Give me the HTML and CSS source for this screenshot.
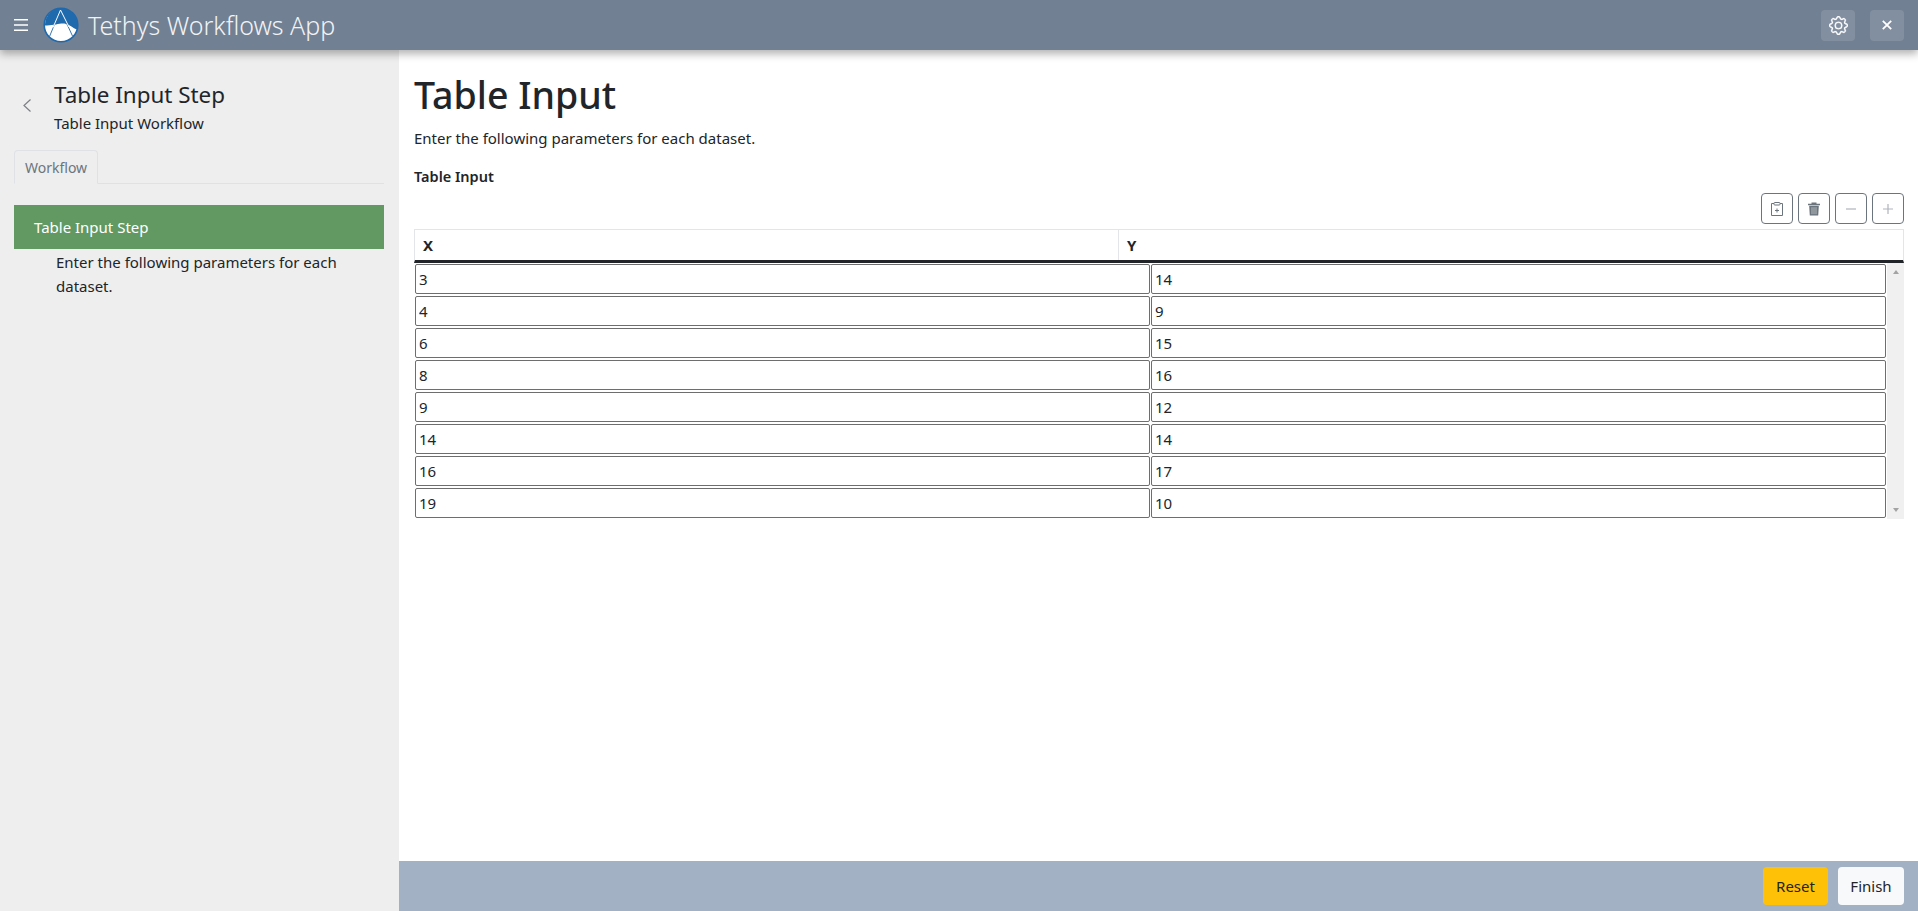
FILE: index.html
```html
<!DOCTYPE html>
<html lang="en">
<head>
  <meta charset="UTF-8" />
  <title>Tethys Workflows App</title>
  <link rel="stylesheet" href="styles.css">
</head>
<body>
  <header class="app-header">
    <button class="menu-toggle" aria-label="Menu">
      <svg width="14" height="14" viewBox="0 0 14 14"><path d="M0 1.700h14M0 7h14M0 12.300h14" stroke="#fff" stroke-width="1.600" fill="none"/></svg>
    </button>
    <svg class="logo" width="36" height="36" viewBox="0 0 36 36">
      <circle cx="18" cy="18" r="16.800" fill="#fff" stroke="#1f69ad" stroke-width="1.600"/>
      <path d="M2 18.500C12 19 17 15.500 23 17C27 18 30 21 33.800 22.500A16.300 16.300 0 1 0 2 18.500Z" fill="#1f69ad"/>
      <path d="M17.500 3L6.500 29.500M17.500 3L29.500 29" stroke="#1f69ad" stroke-width=".9" fill="none"/>
      <path d="M17.500 3L10 20.500M17.500 3L26 20" stroke="#fff" stroke-width="1" fill="none"/>
    </svg>
    <span class="app-title">Tethys Workflows App</span>
    <div class="header-actions">
      <button class="header-btn" aria-label="Settings">
        <svg width="19" height="19" viewBox="0 0 16 16" fill="#fff" stroke="#fff" stroke-width=".25"><path d="M8 4.754a3.246 3.246 0 1 0 0 6.492 3.246 3.246 0 0 0 0-6.492zM5.754 8a2.246 2.246 0 1 1 4.492 0 2.246 2.246 0 0 1-4.492 0z"/><path d="M9.796 1.343c-.527-1.790-3.065-1.790-3.592 0l-.094.319a.873.873 0 0 1-1.255.52l-.292-.16c-1.640-.892-3.433.902-2.540 2.541l.159.292a.873.873 0 0 1-.52 1.255l-.319.094c-1.790.527-1.790 3.065 0 3.592l.319.094a.873.873 0 0 1 .52 1.255l-.16.292c-.892 1.640.901 3.434 2.541 2.540l.292-.159a.873.873 0 0 1 1.255.52l.094.319c.527 1.790 3.065 1.790 3.592 0l.094-.319a.873.873 0 0 1 1.255-.52l.292.16c1.640.893 3.434-.902 2.540-2.541l-.159-.292a.873.873 0 0 1 .52-1.255l.319-.094c1.790-.527 1.790-3.065 0-3.592l-.319-.094a.873.873 0 0 1-.52-1.255l.16-.292c.893-1.640-.902-3.433-2.541-2.540l-.292.159a.873.873 0 0 1-1.255-.52l-.094-.319zm-2.633.283c.246-.835 1.428-.835 1.674 0l.094.319a1.873 1.873 0 0 0 2.693 1.115l.291-.16c.764-.415 1.600.42 1.184 1.185l-.159.292a1.873 1.873 0 0 0 1.116 2.692l.318.094c.835.246.835 1.428 0 1.674l-.319.094a1.873 1.873 0 0 0-1.115 2.693l.16.291c.415.764-.42 1.600-1.185 1.184l-.291-.159a1.873 1.873 0 0 0-2.693 1.116l-.094.318c-.246.835-1.428.835-1.674 0l-.094-.319a1.873 1.873 0 0 0-2.692-1.115l-.292.16c-.764.415-1.600-.42-1.184-1.185l.159-.291A1.873 1.873 0 0 0 1.945 8.930l-.319-.094c-.835-.246-.835-1.428 0-1.674l.319-.094A1.873 1.873 0 0 0 3.060 4.377l-.16-.292c-.415-.764.42-1.600 1.185-1.184l.292.159a1.873 1.873 0 0 0 2.692-1.115l.094-.319z"/></svg>
      </button>
      <button class="header-btn" aria-label="Close">
        <svg width="10" height="10" viewBox="0 0 10 10"><path d="M.8.8l8.400 8.400M9.200.8L.8 9.200" stroke="#fff" stroke-width="1.800" fill="none"/></svg>
      </button>
    </div>
  </header>

  <div class="app-body">
    <aside class="sidebar">
      <div class="sidebar-head">
        <svg class="back-icon" width="8" height="13" viewBox="0 0 8 13"><path d="M7.500.5L1 6.500l6.500 6" stroke="#7c7f83" stroke-width="1.200" fill="none"/></svg>
        <div>
          <div class="step-title">Table Input Step</div>
          <div class="step-workflow">Table Input Workflow</div>
        </div>
      </div>
      <div class="tabs"><span class="tab">Workflow</span></div>
      <div class="step-active">Table Input Step</div>
      <p class="step-help">Enter the following parameters for each dataset.</p>
    </aside>

    <main class="content">
      <div class="page">
        <h1>Table Input</h1>
        <p class="lead">Enter the following parameters for each dataset.</p>
        <label class="field-label">Table Input</label>
        <div class="table-tools">
          <button class="tool-btn" aria-label="Paste">
            <svg width="16" height="16" viewBox="0 0 16 16" fill="none" stroke="#6c757d"><path d="M5 2.500H2.500v12h11v-12H11"/><rect x="5" y="1.500" width="6" height="2.500" rx=".8"/><path d="M8 7.500v4M6 9.500h4"/></svg>
          </button>
          <button class="tool-btn" aria-label="Delete">
            <svg width="16" height="16" viewBox="0 0 16 16"><path d="M2 2.800h12v1.400H2zM5.500 1.500h5v1.300h-5z" fill="#6c757d"/><path d="M3.200 4.800h9.600l-.6 9.700H3.800z" fill="#6c757d"/><path d="M6 6.200v7M8 6.200v7M10 6.200v7" stroke="#fff" stroke-width=".5"/></svg>
          </button>
          <button class="tool-btn" aria-label="Remove row">
            <svg width="16" height="16" viewBox="0 0 16 16"><path d="M3 8h10" stroke="#adb5bd" stroke-width="1.200"/></svg>
          </button>
          <button class="tool-btn" aria-label="Add row">
            <svg width="16" height="16" viewBox="0 0 16 16"><path d="M3 8h10M8 3v10" stroke="#adb5bd" stroke-width="1.200"/></svg>
          </button>
        </div>

        <div class="data-head">
          <div class="head-cell head-x">X</div>
          <div class="head-cell head-y">Y</div>
        </div>
        <div class="data-body">
          <div class="data-rows">
            <input value="3"><input value="14">
            <input value="4"><input value="9">
            <input value="6"><input value="15">
            <input value="8"><input value="16">
            <input value="9"><input value="12">
            <input value="14"><input value="14">
            <input value="16"><input value="17">
            <input value="19"><input value="10">
          </div>
          <div class="scroll-track">
            <span class="arrow-up"></span>
            <span class="arrow-down"></span>
          </div>
        </div>
      </div>

      <footer class="actions">
        <button class="btn btn-reset">Reset</button>
        <button class="btn btn-finish">Finish</button>
      </footer>
    </main>
  </div>
</body>
</html>
```

FILE: styles.css
```css
* {
  box-sizing: border-box;
}

html, body {
  height: 100%;
}

body {
  margin: 0;
  font-family: "Noto Sans", "Open Sans", sans-serif;
  font-size: 15px;
  color: #212529;
  display: flex;
  flex-direction: column;
  overflow: hidden;
}

button {
  font-family: inherit;
}

.app-header {
  height: 50px;
  flex: none;
  display: flex;
  align-items: center;
  padding: 0 14px;
  background: #718093;
  box-shadow: 0 4px 8px rgba(0,0,0,0.3);
  position: relative;
  z-index: 2;
}

.menu-toggle {
  background: none;
  border: none;
  padding: 0;
  width: 14px;
  height: 14px;
  display: flex;
}

.logo {
  margin-left: 15px;
}

.app-title {
  margin-left: 9px;
  font-size: 25px;
  font-weight: 300;
  color: #f1f3f5;
}

.header-actions {
  margin-left: auto;
  display: flex;
  gap: 15px;
}

.header-btn {
  width: 34px;
  height: 31px;
  border: none;
  border-radius: 4px;
  background: rgba(255,255,255,0.12);
  display: flex;
  align-items: center;
  justify-content: center;
  padding: 0;
}

.app-body {
  flex: 1;
  display: flex;
  min-height: 0;
}

.sidebar {
  width: 399px;
  flex: none;
  background: #eee;
  padding: 29px 15px 0 14px;
}

.sidebar-head {
  display: flex;
  align-items: center;
  gap: 23px;
  padding-left: 9px;
}

.back-icon {
  margin-bottom: 3px;
}

.step-title {
  font-size: 22.4px;
  line-height: 32px;
}

.step-workflow {
  font-size: 15px;
  line-height: 24px;
}

.tabs {
  margin-top: 15px;
  border-bottom: 1px solid #dee2e6;
  height: 34px;
}

.tab {
  display: inline-block;
  height: 34px;
  padding: 0 10px;
  line-height: 34px;
  font-size: 14px;
  color: #6c757d;
  border: 1px solid #dee2e6;
  border-bottom-color: #eee;
  border-radius: 4px 4px 0 0;
}

.step-active {
  margin-top: 21px;
  height: 44px;
  line-height: 44px;
  padding-left: 20px;
  background: #629963;
  color: #fff;
  font-size: 15px;
}

.step-help {
  margin: 1px 0 0;
  padding-left: 42px;
  font-size: 15px;
  line-height: 24px;
}

.content {
  flex: 1;
  display: flex;
  flex-direction: column;
  min-width: 0;
}

.page {
  flex: 1;
  padding: 15px 14px 0 15px;
}

h1 {
  margin: 0;
  font-size: 37.5px;
  font-weight: 500;
  line-height: 60px;
}

.lead {
  margin: 1px 0 0;
  line-height: 24px;
}

.field-label {
  display: block;
  margin-top: 14px;
  font-weight: 600;
  font-size: 14.5px;
  line-height: 24px;
}

.table-tools {
  display: flex;
  justify-content: flex-end;
  gap: 5px;
  margin-top: 5px;
}

.tool-btn {
  width: 32px;
  height: 31px;
  padding: 0;
  background: #fff;
  border: 1px solid #6c757d;
  border-radius: 4px;
  display: flex;
  align-items: center;
  justify-content: center;
}

.data-head {
  margin-top: 5px;
  height: 34px;
  display: flex;
  border: 1px solid #e3e5e8;
  border-bottom: 3px solid #212529;
  font-weight: 700;
  font-size: 15px;
}

.head-cell {
  padding-left: 8px;
  line-height: 31px;
}

.head-x {
  width: 704px;
  border-right: 1px solid #e3e5e8;
}

.data-body {
  display: flex;
  height: 256px;
}

.data-rows {
  flex: 1;
  display: grid;
  grid-template-columns: 1fr 1fr;
  grid-auto-rows: 30px;
  gap: 2px 1px;
  padding: 1px 1px 0;
}

.data-rows input {
  min-width: 0;
  height: 30px;
  padding: 0 3px;
  font-family: inherit;
  font-size: 15px;
  color: #212529;
  background: #fff;
  border: 1px solid #6e6e6e;
  border-radius: 2px;
}

.scroll-track {
  width: 17px;
  flex: none;
  background: #f0f0f0;
  display: flex;
  flex-direction: column;
  justify-content: space-between;
  align-items: center;
  padding: 7px 0;
}

.arrow-up, .arrow-down {
  width: 0;
  height: 0;
  border-left: 3.5px solid transparent;
  border-right: 3.5px solid transparent;
}

.arrow-up {
  border-bottom: 4px solid #a3a3a3;
}

.arrow-down {
  border-top: 4px solid #a3a3a3;
}

.actions {
  height: 50px;
  flex: none;
  display: flex;
  justify-content: flex-end;
  align-items: center;
  gap: 10px;
  padding: 0 14px;
  background: #a2b1c4;
}

.btn {
  width: 66px;
  height: 38px;
  padding: 0;
  border: none;
  border-radius: 4px;
  font-size: 15px;
  color: #212529;
}

.btn-reset {
  width: 65px;
  background: #ffc107;
}

.btn-finish {
  background: #f8f9fa;
}
```
